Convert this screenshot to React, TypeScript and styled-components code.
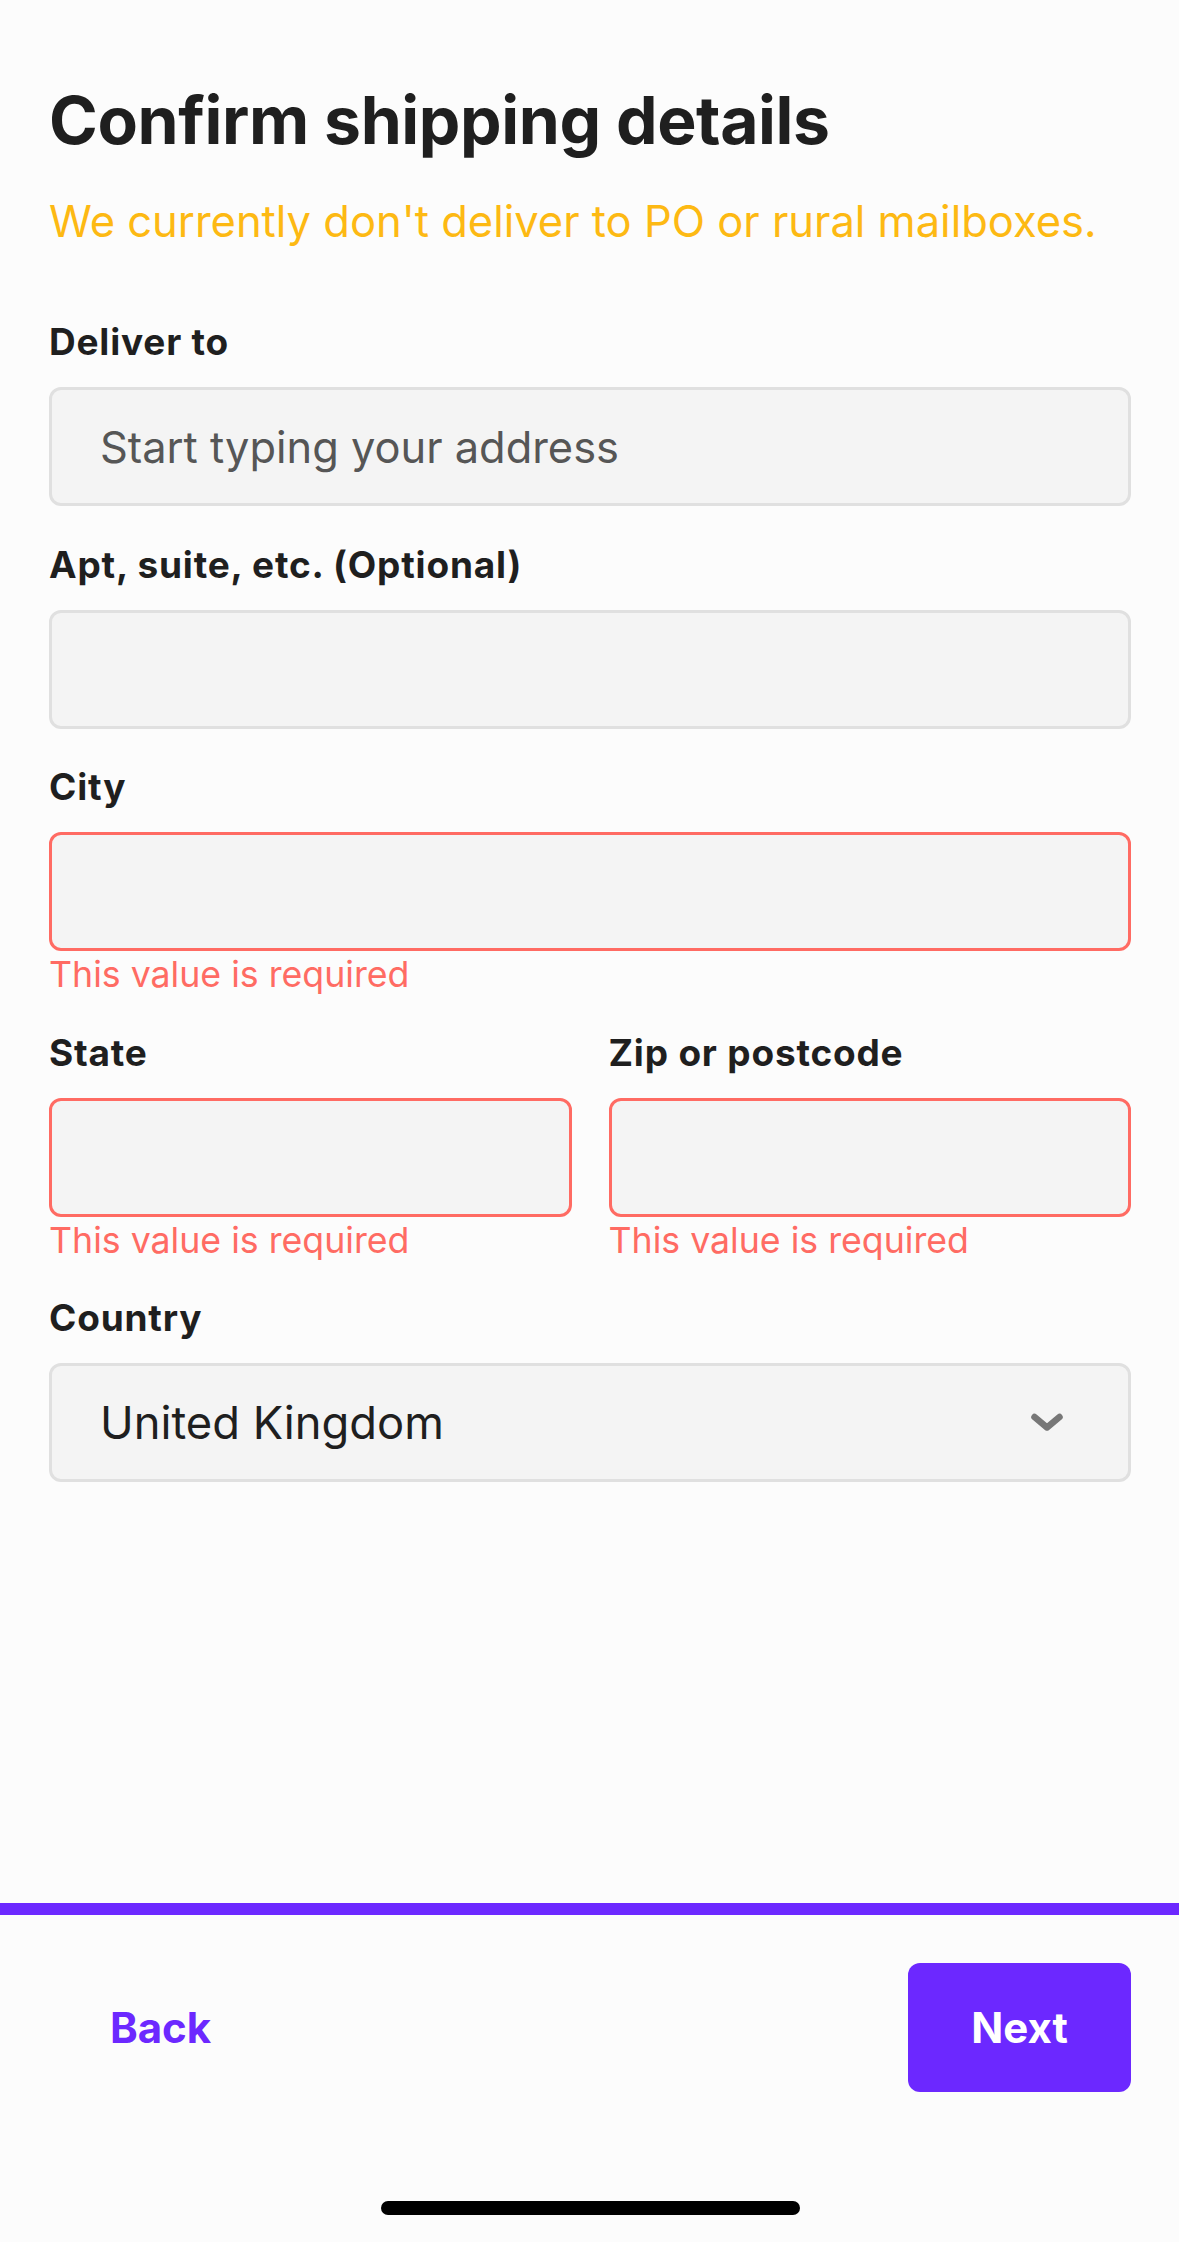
import React from 'react';
import styled, { createGlobalStyle } from 'styled-components';

const GlobalStyle = createGlobalStyle`
  html, body {
    margin: 0;
    padding: 0;
    background: #fcfcfc;
  }
  * {
    box-sizing: border-box;
  }
  body {
    font-family: Inter, "Noto Sans", "Liberation Sans", sans-serif;
    color: #1f1f1f;
  }
`;

const Screen = styled.div`
  min-height: 2242px;
  display: flex;
  flex-direction: column;
  background: #fcfcfc;
`;

const Content = styled.main`
  flex: 1;
  padding: 82px 48px 0 49px;
`;

const Title = styled.h1`
  margin: 0;
  font-size: 66px;
  line-height: 76px;
  font-weight: 700;
  letter-spacing: -0.4px;
  color: #1f1f1f;
`;

const Notice = styled.p`
  margin: 39px 0 0;
  font-size: 43.5px;
  line-height: 48px;
  font-weight: 400;
  color: #fdb913;
`;

const Form = styled.form`
  margin-top: 77px;
  display: flex;
  flex-direction: column;
  gap: 38.5px;
`;

const Row = styled.div`
  display: grid;
  grid-template-columns: 1fr 1fr;
  column-gap: 37px;
`;

const Field = styled.div`
  display: flex;
  flex-direction: column;
`;

const Label = styled.label`
  font-size: 37px;
  line-height: 40px;
  font-weight: 700;
  letter-spacing: 0.8px;
  color: #1f1f1f;
  margin-bottom: 25px;
`;

const Input = styled.input<{ $error?: boolean }>`
  width: 100%;
  height: 119px;
  padding: 0 48px;
  border: 3px solid ${p => (p.$error ? '#ff6b63' : '#e0e0e0')};
  border-radius: 12px;
  background: #f4f4f4;
  font-family: inherit;
  font-size: 43.4px;
  color: #1f1f1f;
  outline: none;

  &::placeholder {
    color: #565656;
  }
`;

const ErrorText = styled.span`
  margin-top: 3px;
  font-size: 35.7px;
  line-height: 40px;
  color: #ff6b63;
`;

const SelectBox = styled.div`
  height: 119px;
  padding: 0 63px 0 48px;
  border: 3px solid #e0e0e0;
  border-radius: 12px;
  background: #f4f4f4;
  display: flex;
  align-items: center;
  justify-content: space-between;
  font-size: 45.3px;
  color: #1f1f1f;
  cursor: pointer;
`;

const Footer = styled.footer`
  border-top: 12px solid #6c28ff;
  padding: 48px 48px 0 49px;
  display: flex;
  flex-direction: column;
`;

const ButtonRow = styled.div`
  display: flex;
  justify-content: space-between;
`;

const Button = styled.button<{ $variant?: 'primary' | 'ghost' }>`
  width: 223px;
  height: 129px;
  border-radius: 12px;
  border: none;
  font-family: inherit;
  font-size: 42px;
  font-weight: 700;
  cursor: pointer;
  background: ${p => (p.$variant === 'primary' ? '#6c28ff' : 'transparent')};
  color: ${p => (p.$variant === 'primary' ? '#ffffff' : '#6c28ff')};
`;

const HomeIndicator = styled.div`
  align-self: center;
  width: 419px;
  height: 14px;
  border-radius: 7px;
  background: #000;
  margin: 109px 0 27px;
`;

const Chevron = () => (
  <svg width="36" height="24" viewBox="0 0 36 24" fill="none">
    <path d="M5.5 6 L18 16.5 L30.5 6" stroke="#777" strokeWidth="6.5" strokeLinecap="round" strokeLinejoin="round" />
  </svg>
);

export default function App() {
  return (
    <>
      <GlobalStyle />
      <Screen>
        <Content>
          <Title>Confirm shipping details</Title>
          <Notice>We currently don't deliver to PO or rural mailboxes.</Notice>
          <Form onSubmit={e => e.preventDefault()}>
            <Field>
              <Label>Deliver to</Label>
              <Input placeholder="Start typing your address" />
            </Field>
            <Field>
              <Label>Apt, suite, etc. (Optional)</Label>
              <Input />
            </Field>
            <Field>
              <Label>City</Label>
              <Input $error />
              <ErrorText>This value is required</ErrorText>
            </Field>
            <Row>
              <Field>
                <Label>State</Label>
                <Input $error />
                <ErrorText>This value is required</ErrorText>
              </Field>
              <Field>
                <Label>Zip or postcode</Label>
                <Input $error />
                <ErrorText>This value is required</ErrorText>
              </Field>
            </Row>
            <Field>
              <Label>Country</Label>
              <SelectBox>
                <span>United Kingdom</span>
                <Chevron />
              </SelectBox>
            </Field>
          </Form>
        </Content>
        <Footer>
          <ButtonRow>
            <Button type="button" $variant="ghost">Back</Button>
            <Button type="button" $variant="primary">Next</Button>
          </ButtonRow>
          <HomeIndicator />
        </Footer>
      </Screen>
    </>
  );
}
